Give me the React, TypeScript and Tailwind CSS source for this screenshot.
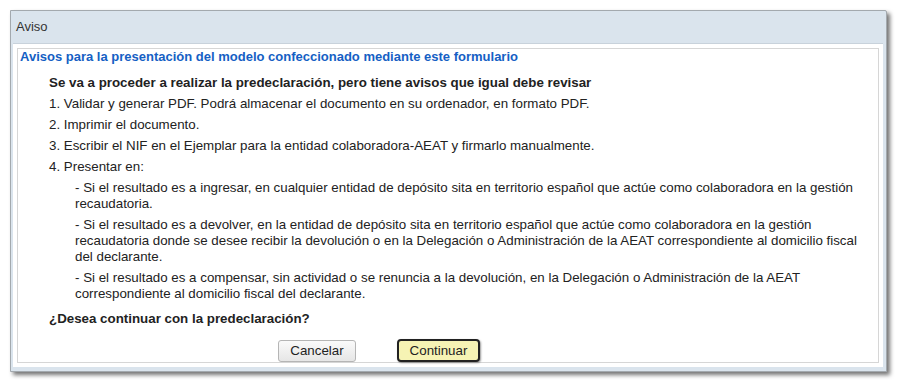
import React from 'react';

const subItems = [
  'Si el resultado es a ingresar, en cualquier entidad de depósito sita en territorio español que actúe como colaboradora en la gestión recaudatoria.',
  'Si el resultado es a devolver, en la entidad de depósito sita en territorio español que actúe como colaboradora en la gestión recaudatoria donde se desee recibir la devolución o en la Delegación o Administración de la AEAT correspondiente al domicilio fiscal del declarante.',
  'Si el resultado es a compensar, sin actividad o se renuncia a la devolución, en la Delegación o Administración de la AEAT correspondiente al domicilio fiscal del declarante.',
];

const steps = [
  '1. Validar y generar PDF. Podrá almacenar el documento en su ordenador, en formato PDF.',
  '2. Imprimir el documento.',
  '3. Escribir el NIF en el Ejemplar para la entidad colaboradora-AEAT y firmarlo manualmente.',
  '4. Presentar en:',
];

export default function App() {
  return (
    <div
      className="w-[899px] h-[386px] bg-white pt-[10px] pl-[10px] text-[#222]"
      style={{ fontFamily: '"Liberation Sans", Arial, sans-serif' }}
    >
      <div className="w-[877px] h-[362px] bg-[#dae4ed] border border-[#a3a9ae] rounded-tr-[2px] shadow-[3px_3px_4px_rgba(0,0,0,0.55)] flex flex-col">
        <div className="h-[32px] flex items-center pl-[5px] text-[13px] text-[#333]">Aviso</div>

        <div className="flex-1 ml-[2px] mr-[3px] mb-[4px] bg-white border-t border-[#c8d2db] p-[4px]">
          <div className="h-full border border-[#d6d6d6] pl-[2px] pr-[2px]">
            <div className="text-[13px] leading-[16px] font-bold text-[#1560c4]">
              Avisos para la presentación del modelo confeccionado mediante este formulario
            </div>

            <div className="pl-[29px] text-[13.33px] leading-[16px]">
              <p className="font-bold mt-[10px] mb-[5px]">
                Se va a proceder a realizar la predeclaración, pero tiene avisos que igual debe revisar
              </p>
              {steps.map((s) => (
                <p key={s} className="mb-[5px]">
                  {s}
                </p>
              ))}
              <div className="pl-[26px]">
                {subItems.map((s) => (
                  <p key={s} className="mb-[5px]">
                    - {s}
                  </p>
                ))}
              </div>
              <p className="font-bold mt-[9px]">¿Desea continuar con la predeclaración?</p>
            </div>

            <div className="flex items-center mt-[12px] pl-[258px] gap-[41px]">
              <button className="w-[78px] h-[22px] text-[13.33px] rounded-[3px] border border-[#b5b5b5] bg-gradient-to-b from-[#fafafa] to-[#e6e6e6] text-[#222]">
                Cancelar
              </button>
              <button className="w-[83px] h-[23px] text-[13.33px] rounded-[4px] border-2 border-[#222] bg-[#f6f3b4] shadow-[1px_1px_2px_rgba(0,0,0,0.4)] text-[#222]">
                Continuar
              </button>
            </div>
          </div>
        </div>
      </div>
    </div>
  );
}
